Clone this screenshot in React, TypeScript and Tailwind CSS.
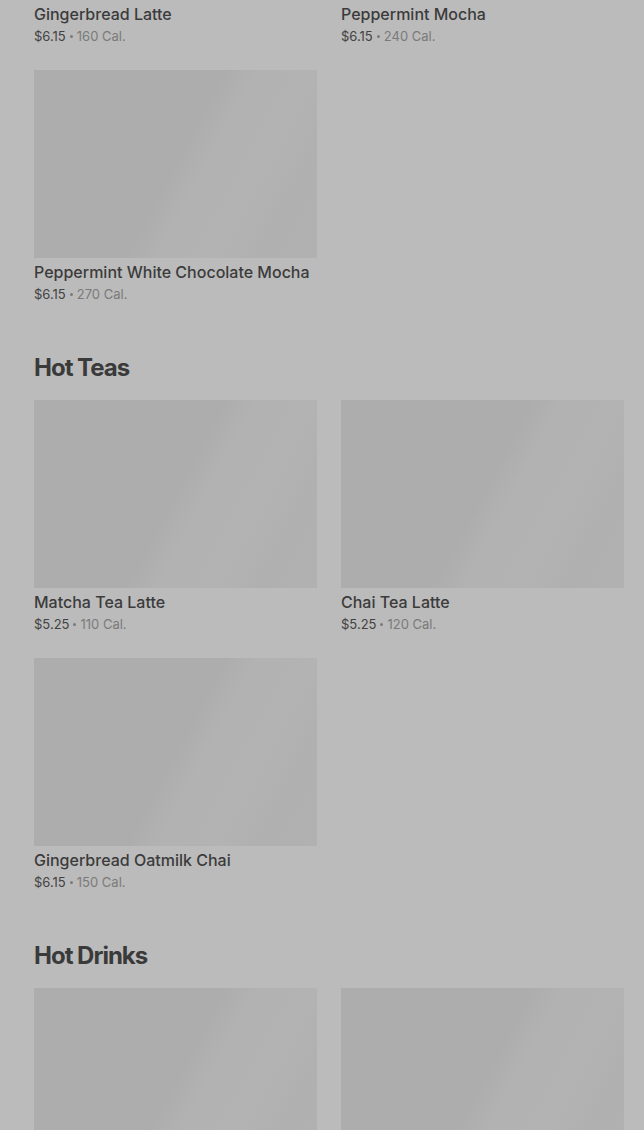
import * as React from 'react'

type Item = {
  name: string
  price: string
  cal: string
}

type Section = {
  title?: string
  items: Item[]
}

const sections: Section[] = [
  {
    items: [
      { name: 'Gingerbread Latte', price: '$6.15', cal: '160 Cal.' },
      { name: 'Peppermint Mocha', price: '$6.15', cal: '240 Cal.' },
      { name: 'Peppermint White Chocolate Mocha', price: '$6.15', cal: '270 Cal.' },
    ],
  },
  {
    title: 'Hot Teas',
    items: [
      { name: 'Matcha Tea Latte', price: '$5.25', cal: '110 Cal.' },
      { name: 'Chai Tea Latte', price: '$5.25', cal: '120 Cal.' },
      { name: 'Gingerbread Oatmilk Chai', price: '$6.15', cal: '150 Cal.' },
    ],
  },
  {
    title: 'Hot Drinks',
    items: [
      { name: 'Hot Chocolate', price: '$4.45', cal: '370 Cal.' },
      { name: 'Steamed Milk', price: '$3.65', cal: '190 Cal.' },
    ],
  },
]

const Card = ({ item }: { item: Item }) => (
  <div className="flex flex-col">
    <div className="h-[188px] w-full bg-[linear-gradient(118deg,#adadad_0%,#adadad_50%,#b2b2b2_58%,#b3b3b3_74%,#b0b0b0_84%,#b1b1b1_100%)]" />
    <div className="mt-1 h-5 text-base leading-5 font-medium text-[#3b3b3b]">{item.name}</div>
    <div className="mt-[2px] flex h-5 items-center text-[13px] leading-5 text-[#7a7a7a]">
      <span className="text-[#424242]">{item.price}</span>
      <span className="mx-[4px] h-[3px] w-[3px] rounded-full bg-[#7a7a7a]" />
      <span>{item.cal}</span>
    </div>
  </div>
)

export default function App() {
  return (
    <div
      className="h-[1130px] w-full overflow-hidden bg-[#bbbbbb]"
      style={{ fontFamily: 'Inter, "Noto Sans", sans-serif' }}
    >
      <div className="-mt-[188px] flex flex-col gap-12 pl-[34px] pr-[20px]">
        {sections.map((section, idx) => (
          <div key={idx} className="flex flex-col">
            {section.title && (
              <h2 className="mb-4 h-8 text-2xl leading-8 font-bold tracking-[-1px] text-[#3a3a3a]">
                {section.title}
              </h2>
            )}
            <div className="grid grid-cols-2 gap-6">
              {section.items.map((item) => (
                <Card key={item.name} item={item} />
              ))}
            </div>
          </div>
        ))}
      </div>
    </div>
  )
}
